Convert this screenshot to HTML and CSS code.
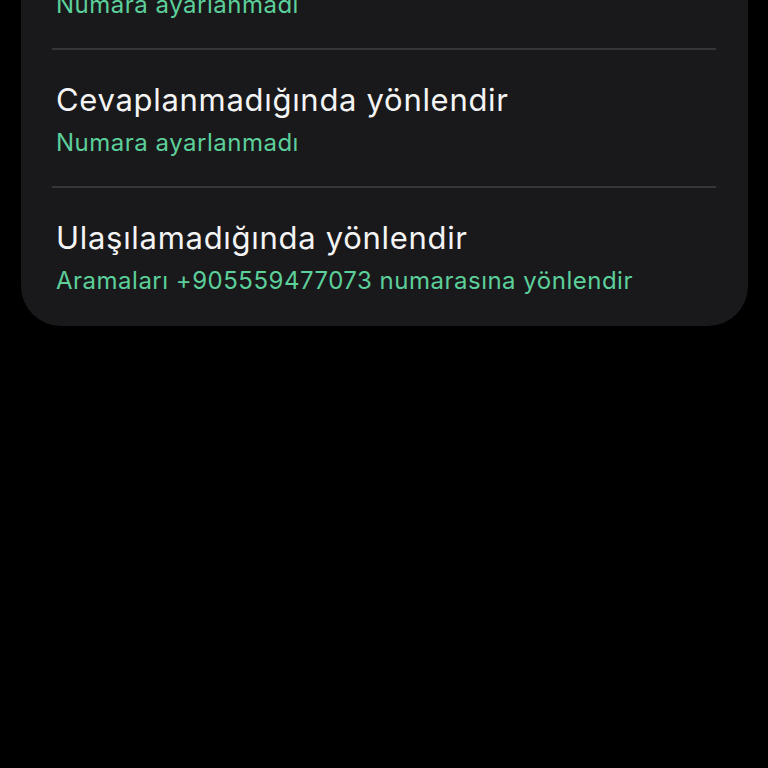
FILE: index.html
```html
<!DOCTYPE html>
<html lang="tr">
<head>
    <meta charset="UTF-8">
    <meta name="viewport" content="width=device-width, initial-scale=1.0">
    <title>Arama yönlendirme</title>

    <link rel="stylesheet" href="styles.css">
</head>

<body>
    <div class="card">
        <div class="row">
            <div class="title">Meşgulken yönlendir</div>
            <div class="sub">Numara ayarlanmadı</div>
        </div>
        <div class="row">
            <div class="title">Cevaplanmadığında yönlendir</div>
            <div class="sub">Numara ayarlanmadı</div>
        </div>
        <div class="row">
            <div class="title">Ulaşılamadığında yönlendir</div>
            <div class="sub">Aramaları +905559477073 numarasına yönlendir</div>
        </div>
    </div>
</body>
</html>
```

FILE: styles.css
```css
* {
  margin: 0;
  padding: 0;
  box-sizing: border-box;
}

body {
  background: #000;
  font-family: Inter, Roboto, sans-serif;
}

/* list card, scrolled so the first row is mostly above the top */
.card {
  margin: -88px 20px 0 21px;
  padding: 0 32px 0 31px;
  background: #19191b;
  border-radius: 40px;
}

.row {
  padding: 30px 0 27px 4px;
}

.row + .row {
  border-top: 2px solid #363638;
}

.row:last-child {
  padding-bottom: 29px;
}

.title {
  font-size: 31px;
  line-height: 40px;
  letter-spacing: 0.7px;
  color: #f4f4f4;
}

.sub {
  margin-top: 7px;
  font-size: 24px;
  line-height: 32px;
  letter-spacing: 0.5px;
  color: #5ccf9a;
}
```
